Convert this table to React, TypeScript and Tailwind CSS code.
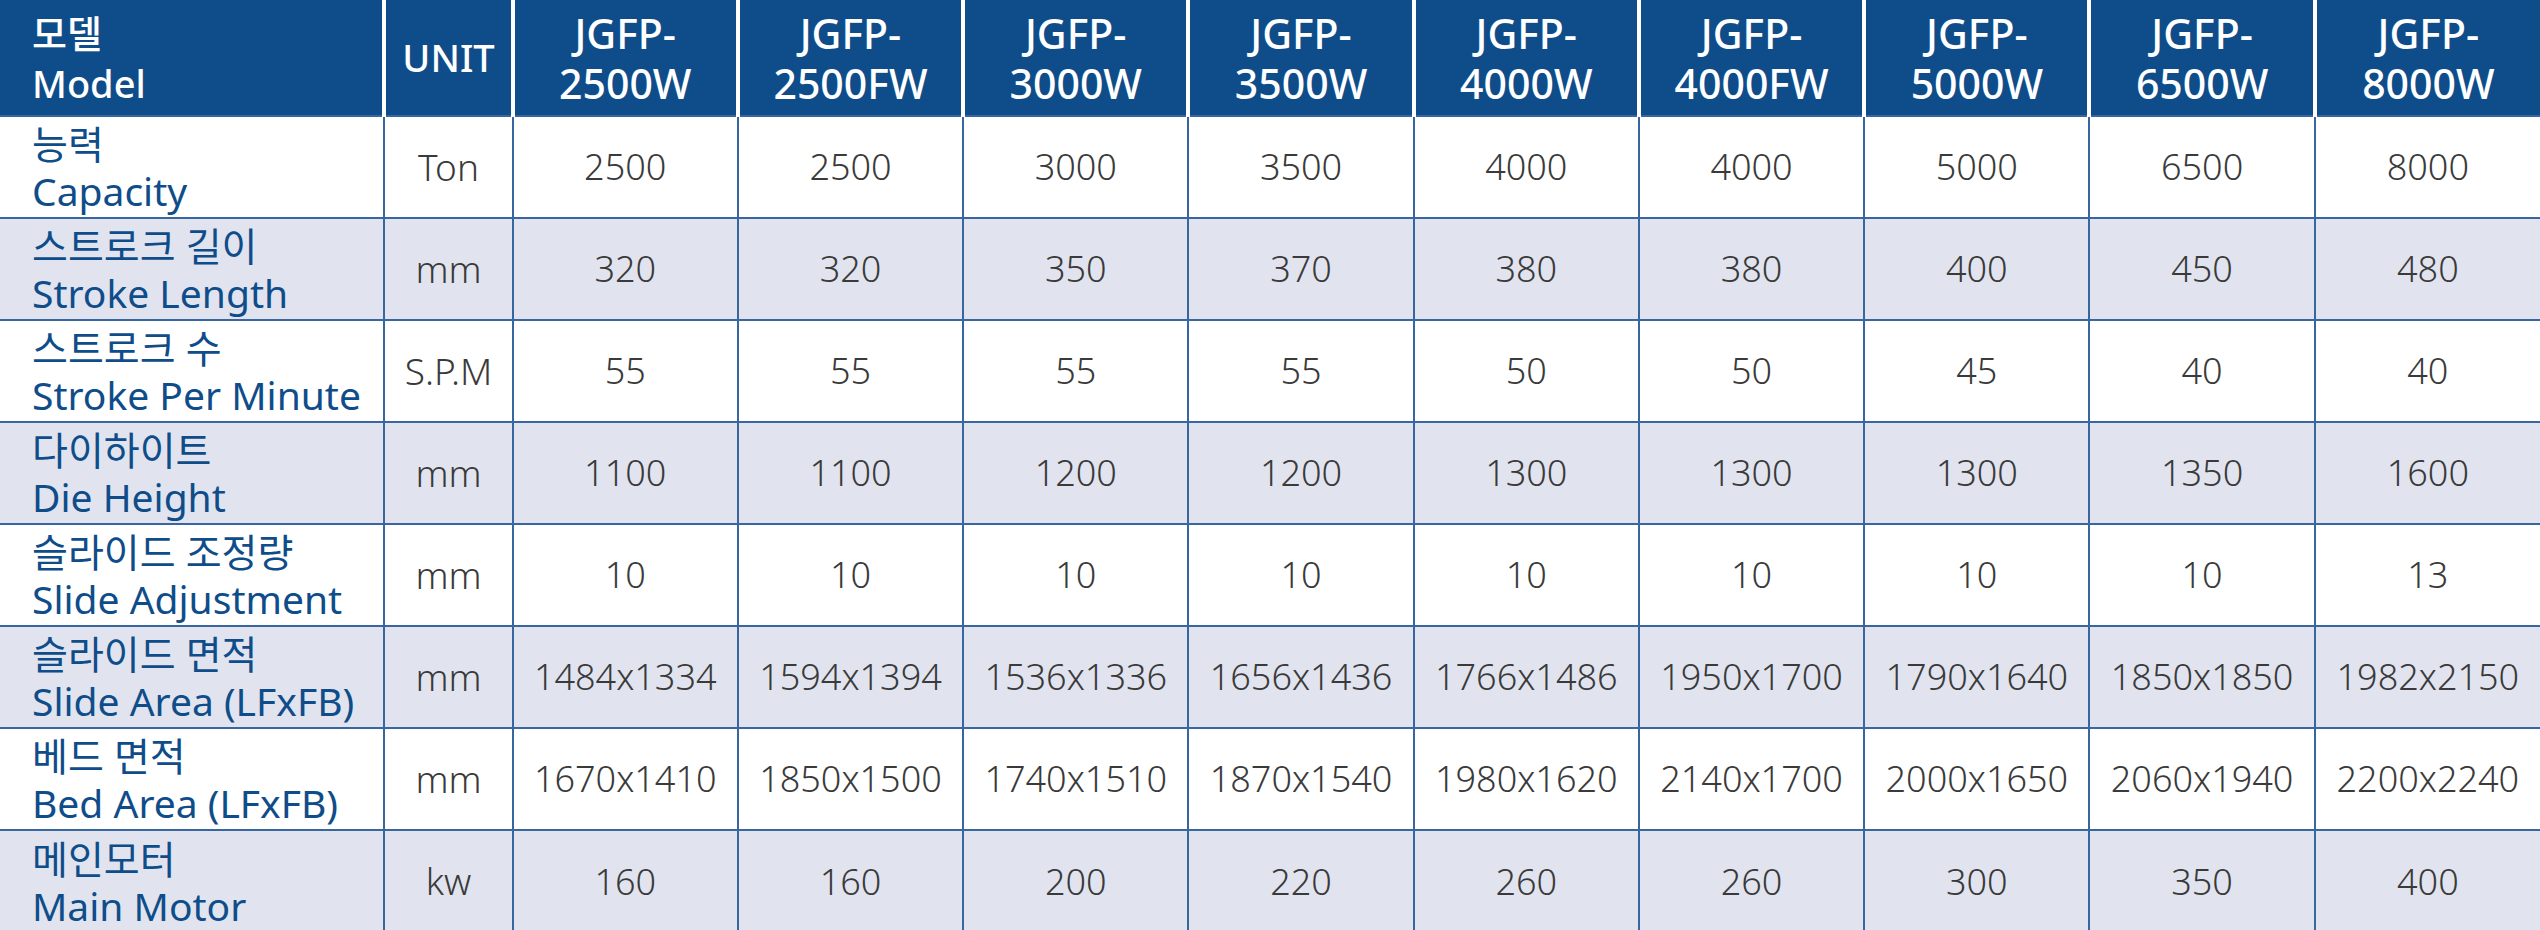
import React from 'react'

const models = ['2500W', '2500FW', '3000W', '3500W', '4000W', '4000FW', '5000W', '6500W', '8000W']

const rows: { ko: string; en: string; unit: string; values: string[] }[] = [
  { ko: '능력', en: 'Capacity', unit: 'Ton', values: ['2500', '2500', '3000', '3500', '4000', '4000', '5000', '6500', '8000'] },
  { ko: '스트로크 길이', en: 'Stroke Length', unit: 'mm', values: ['320', '320', '350', '370', '380', '380', '400', '450', '480'] },
  { ko: '스트로크 수', en: 'Stroke Per Minute', unit: 'S.P.M', values: ['55', '55', '55', '55', '50', '50', '45', '40', '40'] },
  { ko: '다이하이트', en: 'Die Height', unit: 'mm', values: ['1100', '1100', '1200', '1200', '1300', '1300', '1300', '1350', '1600'] },
  { ko: '슬라이드 조정량', en: 'Slide Adjustment', unit: 'mm', values: ['10', '10', '10', '10', '10', '10', '10', '10', '13'] },
  {
    ko: '슬라이드 면적',
    en: 'Slide Area (LFxFB)',
    unit: 'mm',
    values: ['1484x1334', '1594x1394', '1536x1336', '1656x1436', '1766x1486', '1950x1700', '1790x1640', '1850x1850', '1982x2150'],
  },
  {
    ko: '베드 면적',
    en: 'Bed Area (LFxFB)',
    unit: 'mm',
    values: ['1670x1410', '1850x1500', '1740x1510', '1870x1540', '1980x1620', '2140x1700', '2000x1650', '2060x1940', '2200x2240'],
  },
  { ko: '메인모터', en: 'Main Motor', unit: 'kw', values: ['160', '160', '200', '220', '260', '260', '300', '350', '400'] },
]

export default function App() {
  return (
    <div
      className="w-[2540px] h-[930px] overflow-hidden bg-white"
      style={{ fontFamily: '"Noto Sans", "Noto Sans CJK KR", sans-serif' }}
    >
      <table className="w-[2540px] table-fixed border-collapse">
        <colgroup>
          <col className="w-[384px]" />
          <col className="w-[128px]" />
          {models.map((m) => (
            <col key={m} className="w-[225px]" />
          ))}
        </colgroup>
        <thead>
          <tr className="h-[116px] bg-[#0f4d8a] text-white">
            <th className="border-r-4 border-white pl-[32px] text-left align-middle text-[38px] font-medium leading-[50px]">
              <div>모델</div>
              <div>Model</div>
            </th>
            <th className="border-x-4 border-white text-center align-middle text-[38px] font-medium">
              UNIT
            </th>
            {models.map((m, i) => (
              <th
                key={m}
                className={`border-white text-center align-middle text-[41px] font-medium leading-[50px] ${
                  i === models.length - 1 ? 'border-l-4' : 'border-x-4'
                }`}
              >
                <div>JGFP-</div>
                <div>{m}</div>
              </th>
            ))}
          </tr>
        </thead>
        <tbody>
          {rows.map((row, r) => (
            <tr key={row.en} className={`h-[102px] ${r % 2 === 1 ? 'bg-[#e1e4ef]' : 'bg-white'}`}>
              <td className="border-t-2 border-r-2 border-[#3766a0] pl-[32px] align-middle text-[39px] leading-[47px] text-[#0f4d8a]">
                <div>{row.ko}</div>
                <div>{row.en}</div>
              </td>
              <td className="border-2 border-[#3766a0] text-center align-middle text-[37px] font-light text-[#3a3a3a]">
                {row.unit}
              </td>
              {row.values.map((v, i) => (
                <td
                  key={i}
                  className={`border-t-2 border-[#3766a0] text-center align-middle text-[36px] font-light text-[#3a3a3a] ${
                    i === row.values.length - 1 ? 'border-l-2' : 'border-x-2'
                  }`}
                >
                  {v}
                </td>
              ))}
            </tr>
          ))}
        </tbody>
      </table>
    </div>
  )
}
